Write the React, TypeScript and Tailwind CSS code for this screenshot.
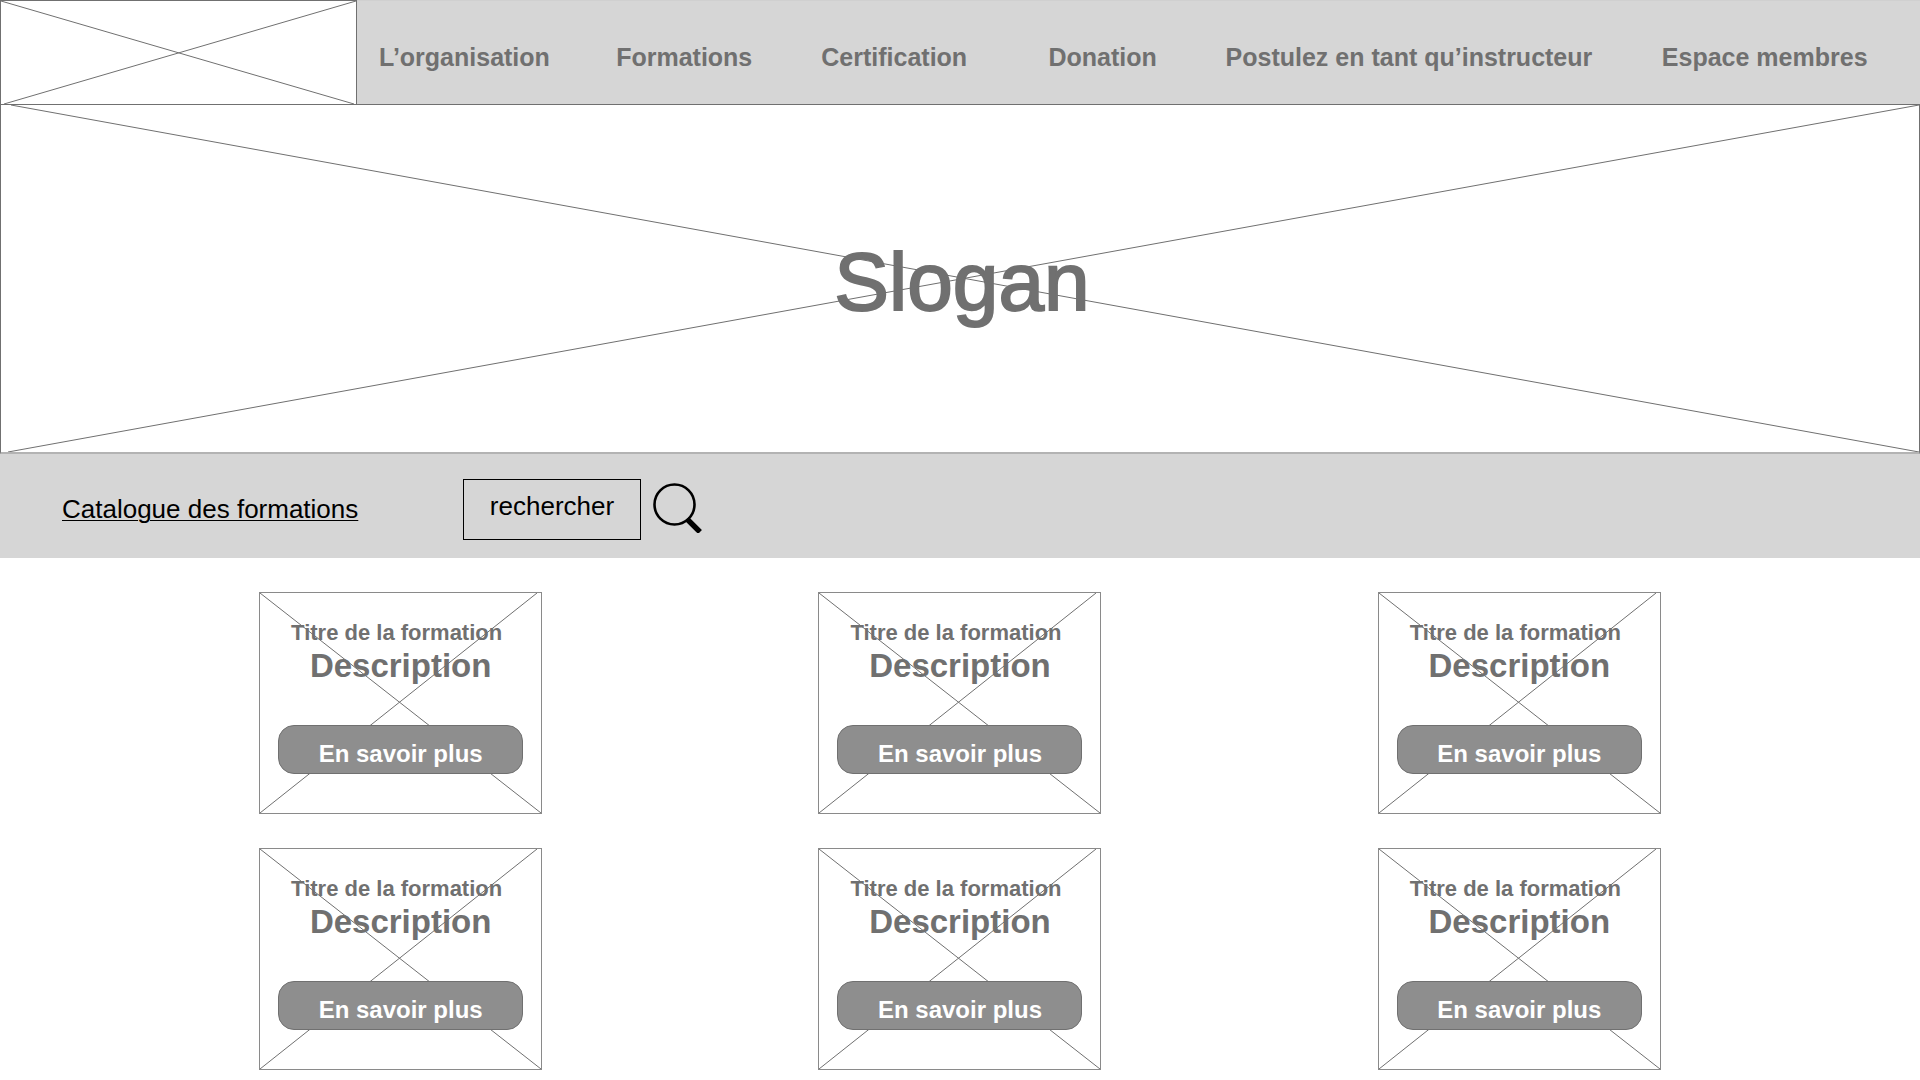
import React from "react";

type CrossProps = { viewBox: string; d: string };

function Cross({ viewBox, d }: CrossProps) {
  return (
    <svg
      aria-hidden="true"
      className="pointer-events-none absolute inset-0 h-full w-full"
      viewBox={viewBox}
      preserveAspectRatio="none"
      fill="none"
    >
      <path d={d} stroke="#707070" strokeWidth="1" vectorEffect="non-scaling-stroke" />
    </svg>
  );
}

const navItems = [
  "L’organisation",
  "Formations",
  "Certification",
  "Donation",
  "Postulez en tant qu’instructeur",
  "Espace membres",
];

const courses = [1, 2, 3, 4, 5, 6];

function CourseCard() {
  return (
    <article className="relative flex h-[222px] w-[283px] flex-col items-center border border-[#8a8a8a] px-[18px] text-[#707070]">
      <Cross viewBox="0 0 281 220" d="M0 0L281 220M0 220L277 0" />
      <h2 className="relative mt-[27px] mr-2 text-[22px] leading-[26px] font-bold whitespace-nowrap">
        Titre de la formation
      </h2>
      <p className="relative mt-px text-[33px] leading-[38px] font-bold">Description</p>
      <button
        type="button"
        className="relative mt-10 h-[49px] w-full rounded-2xl border border-[#707070] bg-[#8e8e8e] pt-2 text-[24px] leading-7 font-bold text-white"
      >
        En savoir plus
      </button>
    </article>
  );
}

export default function App() {
  return (
    <div className="min-h-screen bg-white font-['Liberation_Sans',Arial,sans-serif]">
      <header className="flex h-[104px] bg-[#d6d6d6]">
        <a
          href="#accueil"
          aria-label="Accueil"
          className="relative w-[357px] shrink-0 border-x border-t border-[#707070] bg-white"
        >
          <Cross viewBox="0 0 355 103" d="M0 0L353 103M3 103L355 0" />
        </a>
        <nav className="grid flex-1 grid-cols-[237fr_205fr_227fr_177fr_436fr_207fr] items-center border-t border-[#d0d0d0] pt-2.5 pr-[51px] pl-[22px] text-[25px] font-bold whitespace-nowrap text-[#707070]">
          {navItems.map((item) => (
            <a key={item} href="#nav">
              {item}
            </a>
          ))}
        </nav>
      </header>

      <section className="relative flex h-[350px] items-center justify-center border border-b-2 border-[#707070] border-b-[#b3b3b3] pt-1.5 pl-1">
        <Cross viewBox="0 0 1918 347" d="M10 0L1918 347M7 347L1918 0" />
        <h1 className="relative text-[82px] leading-none text-[#707070] [-webkit-text-stroke:2px_#707070]">
          Slogan
        </h1>
      </section>

      <div className="flex h-[104px] items-center bg-[#d6d6d6] pt-[7px] pl-[62px] text-[26px] text-black">
        <div className="w-[401px]">
          <a href="#catalogue" className="underline decoration-1 underline-offset-2">
            Catalogue des formations
          </a>
        </div>
        <form className="flex items-center gap-3" onSubmit={(e) => e.preventDefault()}>
          <input
            type="text"
            aria-label="rechercher"
            placeholder="rechercher"
            className="h-[61px] w-[178px] border border-black bg-transparent pb-1.5 text-center placeholder:text-black placeholder:opacity-100"
          />
          <button type="submit" aria-label="Lancer la recherche" className="pb-1">
            <svg className="h-[50px] w-[50px]" viewBox="0 0 50 50" fill="none" stroke="#000">
              <circle cx="21.5" cy="21.5" r="20" strokeWidth="2.6" />
              <path d="M34 36L47 49" strokeWidth="5.4" />
            </svg>
          </button>
        </form>
      </div>

      <main className="grid grid-cols-3 justify-items-center gap-y-[34px] px-[121px] pt-[34px]">
        {courses.map((id) => (
          <CourseCard key={id} />
        ))}
      </main>
    </div>
  );
}
